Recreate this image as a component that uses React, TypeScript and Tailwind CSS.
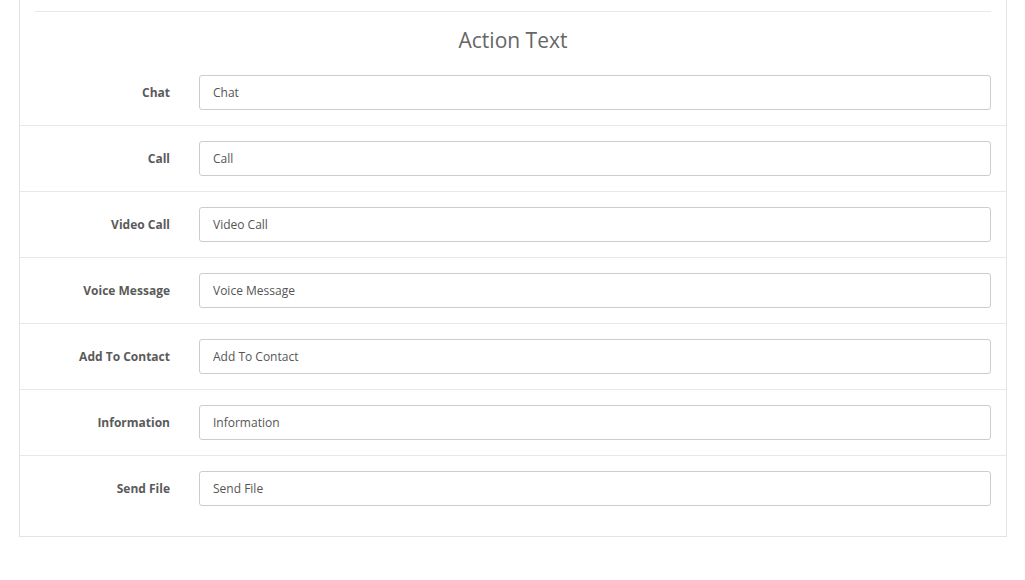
const fields = [
  'Chat',
  'Call',
  'Video Call',
  'Voice Message',
  'Add To Contact',
  'Information',
  'Send File',
];

export default function App() {
  return (
    <div
      className="min-h-[580px] bg-white pl-[19px] pr-[18px] text-[12px] text-[#555]"
      style={{ fontFamily: '"Open Sans", "Liberation Sans", sans-serif' }}
    >
      <div className="border-x border-b border-[#e3e3e3] pb-[15px] pt-[11px]">
        {/* header */}
        <div className="px-[15px]">
          <div className="h-px bg-[#e8e8e8]" />
          <h3 className="pb-[5px] pt-[13px] text-center text-[21px] leading-[30px] font-normal text-[#666]">
            Action Text
          </h3>
        </div>

        {/* rows */}
        {fields.map((f, i) => (
          <div
            key={f}
            className={`flex items-center px-[15px] py-[15px] ${
              i < fields.length - 1 ? 'border-b border-[#e8e8e8]' : ''
            }`}
          >
            <label className="w-[135px] shrink-0 text-right font-bold leading-[17px] text-[#5a5a5a]">
              {f}
            </label>
            <input
              type="text"
              defaultValue={f}
              className="ml-[29px] h-[35px] flex-1 rounded-[3px] border border-[#cccccc] bg-white pl-[13px] pr-[12px] text-[12px] text-[#555] outline-none"
            />
          </div>
        ))}
      </div>
    </div>
  );
}
